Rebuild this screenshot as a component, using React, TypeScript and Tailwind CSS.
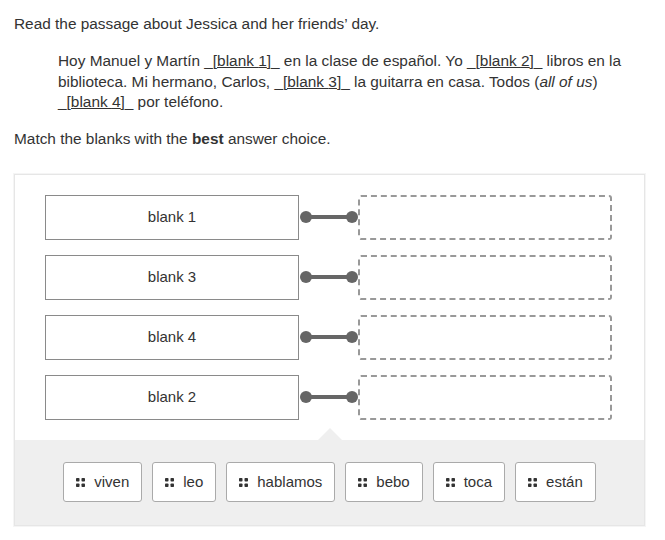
const pairs = ['blank 1', 'blank 3', 'blank 4', 'blank 2'];
const choices = ['viven', 'leo', 'hablamos', 'bebo', 'toca', 'están'];

const Blank = ({ n }: { n: number }) => (
  <span>
    _<span className="underline">[blank {n}]</span>_
  </span>
);

const Grip = () => (
  <svg width="9" height="9" viewBox="0 0 9 9" className="shrink-0">
    <rect x="0" y="0" width="3.5" height="3.5" rx="0.8" fill="#333" />
    <rect x="5.5" y="0" width="3.5" height="3.5" rx="0.8" fill="#333" />
    <rect x="0" y="5.5" width="3.5" height="3.5" rx="0.8" fill="#333" />
    <rect x="5.5" y="5.5" width="3.5" height="3.5" rx="0.8" fill="#333" />
  </svg>
);

const Connector = () => (
  <div className="relative flex h-full w-[59px] items-center">
    <div className="absolute left-[1px] h-3 w-3 rounded-full bg-[#666]" />
    <div className="absolute left-[6px] h-1 w-[47px] bg-[#666]" />
    <div className="absolute left-[47px] h-3 w-3 rounded-full bg-[#666]" />
  </div>
);

export default function App() {
  return (
    <div className="h-[540px] w-[665px] bg-white font-['Liberation_Sans',Arial,sans-serif] text-[15.4px] text-[#333]">
      <div className="pl-[14px] pt-[13px] leading-[21px]">
        Read the passage about Jessica and her friends’ day.
      </div>
      <div className="pl-[58px] pr-[20px] pt-[17px] leading-[20.5px]">
        Hoy Manuel y Martín <Blank n={1} /> en la clase de español. Yo <Blank n={2} /> libros en la
        biblioteca. Mi hermano, Carlos, <Blank n={3} /> la guitarra en casa. Todos (<i>all of us</i>){' '}
        <Blank n={4} /> por teléfono.
      </div>
      <div className="pl-[14px] pt-[15px] leading-[21px]">
        Match the blanks with the <b>best</b> answer choice.
      </div>

      <div className="ml-[14px] mt-[25px] w-[631px] border border-[#e6e6e6] text-[15px] shadow-[0_0_0_1px_#f5f5f5]">
        <div className="flex flex-col gap-[15px] px-[30px] pb-[20px] pt-[20px]">
          {pairs.map((p) => (
            <div key={p} className="flex h-[45px] items-stretch">
              <div className="flex w-[254px] items-center justify-center border border-[#8a8a8a] bg-white">
                {p}
              </div>
              <Connector />
              <div className="w-[254px] rounded-[3px] border-2 border-dashed border-[#999]" />
            </div>
          ))}
        </div>
        <div className="relative flex h-[85px] items-center justify-center gap-[10px] bg-[#efefef]">
          <div className="absolute left-[303px] top-[-12px] h-0 w-0 border-x-[12px] border-b-[12px] border-x-transparent border-b-[#efefef]" />
          {choices.map((c) => (
            <div
              key={c}
              className="flex h-[40px] items-center gap-[9px] rounded-[3px] border border-[#aaa] bg-white pl-[12px] pr-[12px]"
            >
              <Grip />
              <span>{c}</span>
            </div>
          ))}
        </div>
      </div>
    </div>
  );
}
